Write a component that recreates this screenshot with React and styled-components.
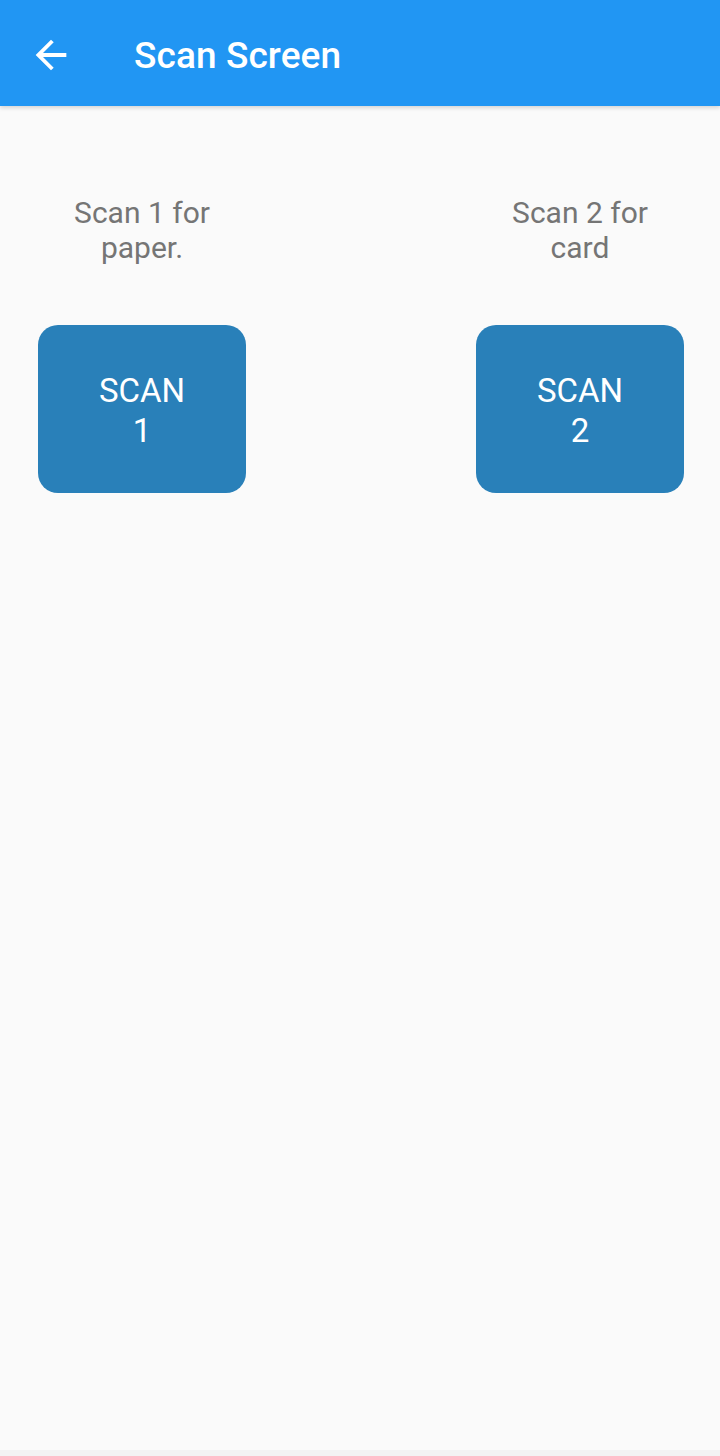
import React from 'react';
import styled, { createGlobalStyle } from 'styled-components';

const GlobalStyle = createGlobalStyle`
  body {
    margin: 0;
    background: #fafafa;
    font-family: Roboto, "Noto Sans", sans-serif;
  }
`;

// Full screen wrapper
const Screen = styled.div`
  width: 720px;
  height: 1456px;
  background: #fafafa;
  display: flex;
  flex-direction: column;
`;

// Blue app bar on top
const AppBar = styled.header`
  height: 106px;
  background: #2196f3;
  display: flex;
  align-items: center;
  padding: 4px 0 0 28px;
  box-sizing: border-box;
  box-shadow: 0 2px 4px rgba(0, 0, 0, 0.15);
`;

const BackButton = styled.button`
  width: 46px;
  height: 46px;
  padding: 0;
  border: none;
  background: transparent;
  display: flex;
  align-items: center;
  justify-content: center;
  margin-right: 60px;
`;

const Title = styled.h1`
  margin: 0;
  color: #ffffff;
  font-size: 37px;
  font-weight: 500;
  letter-spacing: 0.1px;
`;

const Body = styled.main`
  flex: 1;
  display: flex;
  justify-content: space-between;
  padding: 89px 36px 0 38px;
`;

const Column = styled.div`
  width: 208px;
  display: flex;
  flex-direction: column;
  align-items: center;
`;

const Caption = styled.p`
  margin: 0;
  width: 160px;
  text-align: center;
  color: #757575;
  font-size: 30px;
  line-height: 35px;
`;

const ScanButton = styled.button`
  margin-top: 60px;
  width: 208px;
  height: 168px;
  border: none;
  border-radius: 20px;
  background: #2980b9;
  color: #ffffff;
  font-family: Roboto, sans-serif;
  font-size: 33px;
  line-height: 40px;
  padding: 4px 55px 0;
  text-align: center;
`;

const BottomEdge = styled.div`
  height: 6px;
  background: #f3f3f3;
`;

function ArrowBack() {
  return (
    <svg width="46" height="46" viewBox="0 0 24 24" fill="#ffffff">
      <path d="M20 11H7.83l5.59-5.59L12 4l-8 8 8 8 1.41-1.41L7.83 13H20v-2z" />
    </svg>
  );
}

const scans = [
  { caption: 'Scan 1 for paper.', label: 'SCAN 1' },
  { caption: 'Scan 2 for card', label: 'SCAN 2' },
];

export default function App() {
  return (
    <>
      <GlobalStyle />
      <Screen>
        <AppBar>
          <BackButton aria-label="Back">
            <ArrowBack />
          </BackButton>
          <Title>Scan Screen</Title>
        </AppBar>
        <Body>
          {scans.map((s) => (
            <Column key={s.label}>
              <Caption>{s.caption}</Caption>
              <ScanButton>{s.label}</ScanButton>
            </Column>
          ))}
        </Body>
        <BottomEdge />
      </Screen>
    </>
  );
}
